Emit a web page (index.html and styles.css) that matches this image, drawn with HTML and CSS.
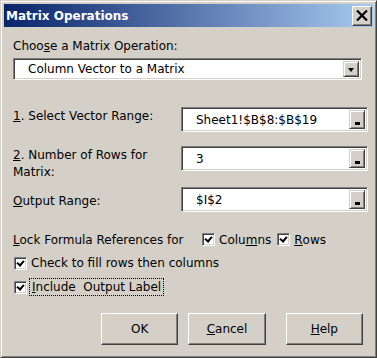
FILE: index.html
```html
<!DOCTYPE html>
<html lang="en">
<head>
  <meta charset="UTF-8">
  <title>Matrix Operations</title>
  <link rel="stylesheet" href="styles.css">
</head>
<body>
  <div class="window">
    <div class="titlebar">
      <span class="title">Matrix Operations</span>
      <span class="close">
        <svg width="12" height="11" viewBox="0 0 12 11"><path d="M1 0.5 L11 10.5 M11 0.5 L1 10.5" stroke="#000" stroke-width="2.2"/></svg>
      </span>
    </div>

    <div class="content">
      <div class="caption">Choo<u>s</u>e a Matrix Operation:</div>
      <div class="combo">
        <span class="field-text">Column Vector to a Matrix</span>
        <span class="btn-small"><span class="arrow"></span></span>
      </div>

      <div class="row row-1">
        <div class="label"><u>1</u>. Select Vector Range:</div>
        <div class="refedit">
          <span class="field-text">Sheet1!$B$8:$B$19</span>
          <span class="btn-small"><span class="bar"></span></span>
        </div>
      </div>

      <div class="row row-2">
        <div class="label two-line"><u>2</u>. Number of Rows for<br>Matrix:</div>
        <div class="refedit">
          <span class="field-text">3</span>
          <span class="btn-small"><span class="bar"></span></span>
        </div>
      </div>

      <div class="row row-3">
        <div class="label"><u>O</u>utput Range:</div>
        <div class="refedit">
          <span class="field-text">$I$2</span>
          <span class="btn-small"><span class="bar"></span></span>
        </div>
      </div>

      <div class="lock-row">
        <span class="lock-label"><u>L</u>ock Formula References for</span>
        <span class="check"><span class="box checked"></span>Colu<u>m</u>ns</span>
        <span class="check"><span class="box checked"></span><u>R</u>ows</span>
      </div>
      <div class="check-row">
        <span class="check"><span class="box checked"></span>Check to fill rows then columns</span>
      </div>
      <div class="check-row">
        <span class="check"><span class="box checked"></span><span class="focus"><u>I</u>nclude&nbsp; Output Label</span></span>
      </div>

      <div class="buttons">
        <span class="button">OK</span>
        <span class="button"><u>C</u>ancel</span>
        <span class="button help"><u>H</u>elp</span>
      </div>
    </div>
  </div>
</body>
</html>
```

FILE: styles.css
```css
html, body {
  margin: 0;
  background: #d4d0c8;
}
.window {
  width: 377px;
  height: 358px;
  box-sizing: border-box;
  border: 1px solid;
  border-color: #d4d0c8 #404040 #404040 #d4d0c8;
  box-shadow: inset 1px 1px #fff, inset -1px -1px #808080;
  padding: 3px 3px 0 3px;
  background: #d4d0c8;
  font-family: "DejaVu Sans", Verdana, sans-serif;
  font-size: 12px;
  color: #000;
}
.titlebar {
  height: 23px;
  display: flex;
  align-items: center;
  justify-content: space-between;
  padding: 0 1px 0 2px;
  background: linear-gradient(to right, #0a246a, #a6caf0);
}
.title {
  color: #fff;
  font-weight: bold;
  font-size: 12px;
}
.close {
  width: 20px;
  height: 20px;
  box-sizing: border-box;
  display: flex;
  align-items: center;
  justify-content: center;
  background: #d4d0c8;
  border: 1px solid;
  border-color: #fff #404040 #404040 #fff;
  box-shadow: inset -1px -1px #808080;
}
.content {
  padding: 12px 0 0 9px;
}
.caption {
  line-height: 15px;
}
.combo, .refedit {
  display: flex;
  align-items: center;
  justify-content: space-between;
  box-sizing: border-box;
  background: #fff;
  border: 1px solid;
  border-color: #808080 #fff #fff #808080;
  box-shadow: inset 1px 1px #404040, inset -1px -1px #d4d0c8;
  padding: 2px 2px 2px 14px;
}
.combo {
  width: 349px;
  height: 22px;
  margin-top: 4px;
}
.refedit {
  width: 187px;
  height: 25px;
}
.btn-small {
  width: 16px;
  height: 100%;
  box-sizing: border-box;
  display: flex;
  align-items: center;
  justify-content: center;
  background: #d4d0c8;
  border: 1px solid;
  border-color: #d4d0c8 #404040 #404040 #d4d0c8;
  box-shadow: inset 1px 1px #fff, inset -1px -1px #808080;
}
.arrow {
  width: 0;
  height: 0;
  border-left: 3.5px solid transparent;
  border-right: 3.5px solid transparent;
  border-top: 4px solid #000;
  margin-top: 1px;
}
.bar {
  width: 5px;
  height: 3px;
  background: #000;
  align-self: flex-end;
  margin-bottom: 3px;
}
.row {
  display: flex;
  align-items: center;
}
.row .label {
  width: 168px;
  line-height: 15px;
}
.row-1 {
  margin-top: 27px;
}
.row-1 .label {
  margin-top: -6px;
}
.row-2 {
  margin-top: 14px;
  align-items: flex-start;
}
.row-2 .label {
  line-height: 17px;
  margin-top: 1px;
}
.row-3 {
  margin-top: 6px;
}
.row-3 .label {
  margin-top: 3px;
}
.lock-row {
  display: flex;
  align-items: center;
  margin-top: 20px;
  height: 15px;
}
.lock-label {
  width: 189px;
}
.check {
  display: flex;
  align-items: center;
  margin-right: 6px;
}
.box {
  width: 13px;
  height: 13px;
  box-sizing: border-box;
  background: #fff;
  border: 1px solid;
  border-color: #808080 #fff #fff #808080;
  box-shadow: inset 1px 1px #404040, inset -1px -1px #d4d0c8;
  margin-right: 4px;
  position: relative;
}
.checked::after {
  content: "";
  position: absolute;
  left: 2px;
  top: 1px;
  width: 3px;
  height: 5px;
  border: solid #000;
  border-width: 0 2px 2px 0;
  transform: translate(1px, 0) rotate(40deg);
}
.check-row {
  margin-top: 9px;
  height: 15px;
  padding-left: 1px;
}
.focus {
  outline: 1px dotted #000;
  outline-offset: 1px;
  padding: 0 1px;
}
.buttons {
  display: flex;
  margin-top: 18px;
  padding-left: 88px;
}
.button {
  width: 79px;
  height: 32px;
  box-sizing: border-box;
  display: flex;
  align-items: center;
  justify-content: center;
  background: #d4d0c8;
  border: 1px solid;
  border-color: #fff #404040 #404040 #fff;
  box-shadow: inset -1px -1px #808080;
  margin-right: 10px;
}
.button.help {
  margin-left: 10px;
}
```
